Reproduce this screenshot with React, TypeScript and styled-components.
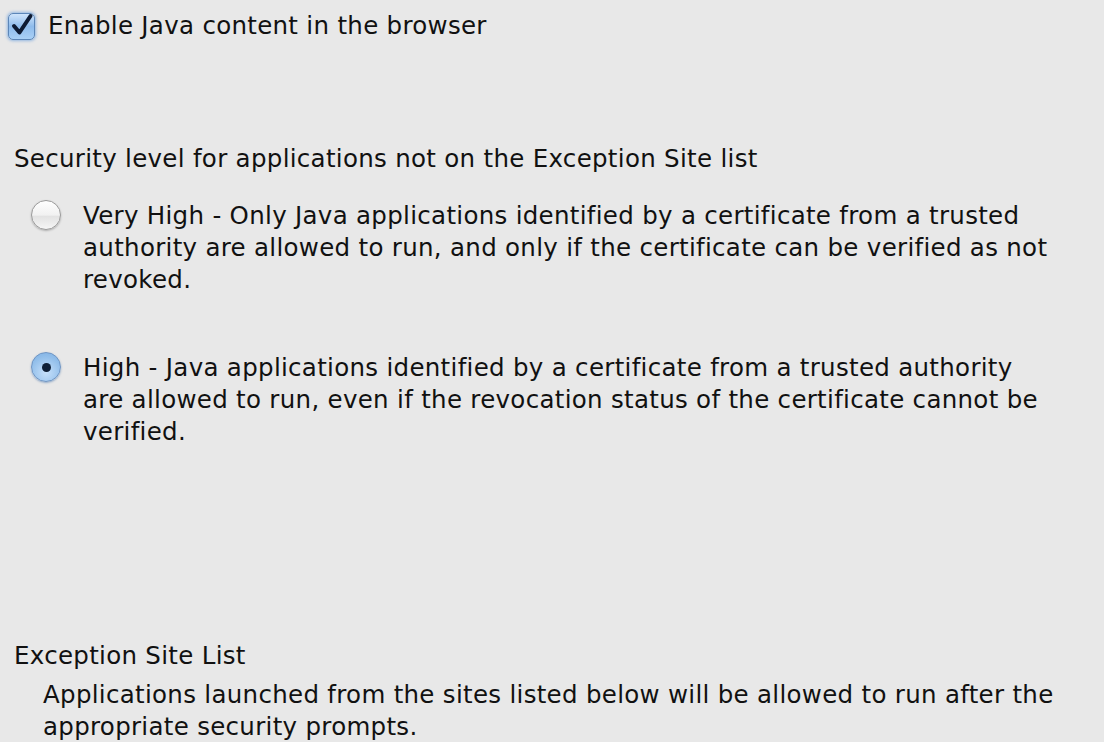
import React from "react";
import styled, { createGlobalStyle } from "styled-components";

const GlobalStyle = createGlobalStyle`
  html, body {
    margin: 0;
    padding: 0;
    background: #e8e8e8;
  }
  body {
    font-family: "DejaVu Sans", "Liberation Sans", sans-serif;
    color: #111;
  }
`;

const Page = styled.div`
  width: 1104px;
  height: 742px;
  box-sizing: border-box;
  padding-top: 1px;
  overflow: hidden;
  background: #e8e8e8;
  font-size: 24.5px;
  letter-spacing: 0.3px;
  line-height: 32px;
`;

const CheckRow = styled.label`
  display: flex;
  align-items: center;
  gap: 13px;
  padding: 9px 0 0 8px;
`;

const CheckBox = styled.span`
  width: 27px;
  height: 27px;
  box-sizing: border-box;
  border-radius: 5px;
  border: 1px solid #5c86b8;
  background: linear-gradient(#cfe4fb, #8fbcec 50%, #a9d0f6);
  box-shadow: 0 0 3px 1px rgba(90, 150, 220, 0.6);
  display: flex;
  align-items: center;
  justify-content: center;
  margin-top: 1px;
`;

const SectionTitle = styled.div<{ $top: number }>`
  padding-left: 14px;
  margin-top: ${(p) => p.$top}px;
  white-space: nowrap;
`;

const Options = styled.div`
  display: flex;
  flex-direction: column;
  gap: 56px;
  margin-top: 25px;
  padding-left: 31px;
`;

const Option = styled.div`
  display: flex;
  align-items: flex-start;
  gap: 22px;
`;

const Radio = styled.span<{ $on?: boolean }>`
  flex: none;
  width: 30px;
  height: 30px;
  box-sizing: border-box;
  border-radius: 50%;
  margin-top: 0;
  border: 1px solid ${(p) => (p.$on ? "#6e95c4" : "#9a9a9a")};
  background: ${(p) =>
    p.$on
      ? "radial-gradient(circle at 50% 70%, #c6e0fa, #8ebce9 70%, #7fb0e2)"
      : "linear-gradient(#ffffff, #f1f1f1 50%, #e2e2e2 55%, #f6f6f6)"};
  box-shadow: ${(p) =>
    p.$on ? "0 1px 2px rgba(60, 110, 170, 0.5)" : "0 1px 2px rgba(0, 0, 0, 0.25)"};
  display: flex;
  align-items: center;
  justify-content: center;
`;

const Dot = styled.span`
  width: 9px;
  height: 9px;
  border-radius: 50%;
  background: #0f1f36;
`;

const OptionText = styled.div`
  display: flex;
  flex-direction: column;
`;

const Line = styled.span`
  white-space: nowrap;
`;

const Description = styled.div`
  margin-top: 7px;
  padding-left: 43px;
  display: flex;
  flex-direction: column;
`;

const Check = () => (
  <svg width="24" height="24" viewBox="0 0 24 24" style={{ marginTop: -4 }}>
    <path
      d="M4 13 L9.5 19.5 L20.5 3"
      fill="none"
      stroke="#0e1b33"
      strokeWidth="4"
      strokeLinecap="round"
      strokeLinejoin="round"
    />
  </svg>
);

const options = [
  {
    on: false,
    lines: [
      "Very High - Only Java applications identified by a certificate from a trusted",
      "authority are allowed to run, and only if the certificate can be verified as not",
      "revoked.",
    ],
  },
  {
    on: true,
    lines: [
      "High - Java applications identified by a certificate from a trusted authority",
      "are allowed to run, even if the revocation status of the certificate cannot be",
      "verified.",
    ],
  },
];

export default function App() {
  return (
    <Page>
      <GlobalStyle />
      <CheckRow>
        <CheckBox>
          <Check />
        </CheckBox>
        <span>Enable Java content in the browser</span>
      </CheckRow>

      <SectionTitle $top={101}>
        Security level for applications not on the Exception Site list
      </SectionTitle>
      <Options>
        {options.map((o) => (
          <Option key={o.lines[0]}>
            <Radio $on={o.on}>{o.on && <Dot />}</Radio>
            <OptionText>
              {o.lines.map((l) => (
                <Line key={l}>{l}</Line>
              ))}
            </OptionText>
          </Option>
        ))}
      </Options>

      <SectionTitle $top={192}>Exception Site List</SectionTitle>
      <Description>
        <Line>
          Applications launched from the sites listed below will be allowed to run after the
        </Line>
        <Line>appropriate security prompts.</Line>
      </Description>
    </Page>
  );
}
